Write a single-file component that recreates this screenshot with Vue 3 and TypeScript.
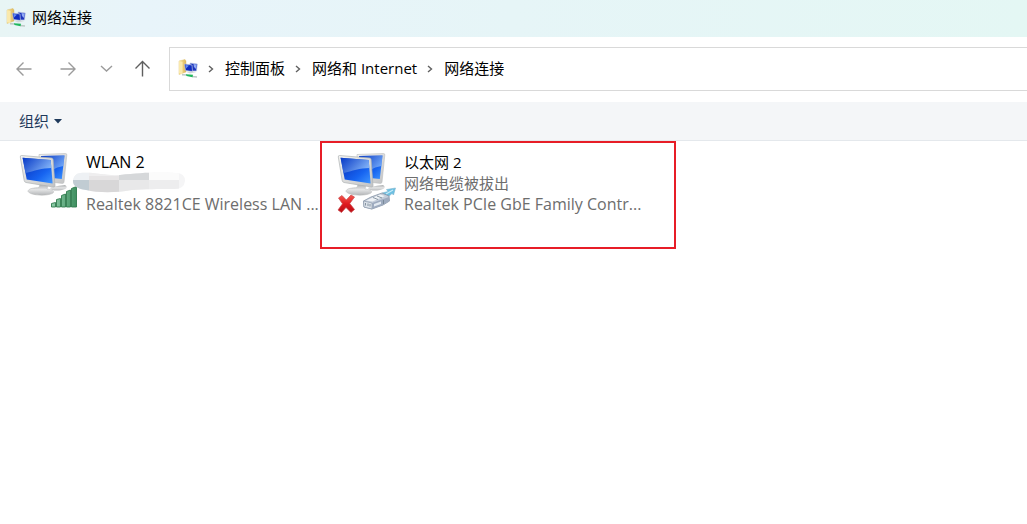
<script setup lang="ts">
interface Label {
  text: string
  lang: 'en' | 'zh'
}

interface Connection {
  name: Label
  status: string
  device: string
  kind: 'wifi' | 'cable'
  marked: boolean
}

const crumbs: string[] = ['控制面板', '网络和 Internet', '网络连接']

const connections: Connection[] = [
  {
    name: { text: 'WLAN 2', lang: 'en' },
    status: '',
    device: 'Realtek 8821CE Wireless LAN ...',
    kind: 'wifi',
    marked: false,
  },
  {
    name: { text: '以太网 2', lang: 'zh' },
    status: '网络电缆被拔出',
    device: 'Realtek PCIe GbE Family Contr...',
    kind: 'cable',
    marked: true,
  },
]
</script>

<template>
  <div class="window">
    <svg class="library" width="0" height="0" aria-hidden="true">
      <defs>
        <linearGradient id="screen" x1="0" y1="0" x2="1" y2="1">
          <stop offset="0" stop-color="#0a3fd0" />
          <stop offset="0.35" stop-color="#0f48d4" />
          <stop offset="0.65" stop-color="#1663f0" />
          <stop offset="1" stop-color="#3f96ff" />
        </linearGradient>
        <linearGradient id="shine" x1="0" y1="0" x2="1" y2="0.5">
          <stop offset="0" stop-color="#0538c4" />
          <stop offset="1" stop-color="#8fbcf8" />
        </linearGradient>
        <linearGradient id="frame" x1="0" y1="0" x2="1" y2="1">
          <stop offset="0" stop-color="#f4f4f2" />
          <stop offset="1" stop-color="#c2c3c4" />
        </linearGradient>
        <linearGradient id="stand" x1="0" y1="0" x2="0" y2="1">
          <stop offset="0" stop-color="#a9abad" />
          <stop offset="0.5" stop-color="#e4e5e6" />
          <stop offset="1" stop-color="#b4b6b8" />
        </linearGradient>
        <linearGradient id="bar" x1="0" y1="0" x2="1" y2="0">
          <stop offset="0" stop-color="#8fceaa" />
          <stop offset="1" stop-color="#3f8f60" />
        </linearGradient>
        <linearGradient id="cross" x1="0" y1="0" x2="0" y2="1">
          <stop offset="0" stop-color="#f45a50" />
          <stop offset="0.5" stop-color="#e01b20" />
          <stop offset="1" stop-color="#b90c14" />
        </linearGradient>
        <linearGradient id="folder" x1="0" y1="0" x2="1" y2="0">
          <stop offset="0" stop-color="#f9e6a0" />
          <stop offset="1" stop-color="#dfb85a" />
        </linearGradient>
        <symbol id="monitors" viewBox="0 0 60 65">
          <path d="M32 38c2-2 11-2 15-3 3 2 2 4-3 5-5 1-11 1-12-2z" fill="url(#stand)" />
          <path d="M21 4.500L47.500 3.500Q49 3.500 48.800 5L46 32Q45.800 33.500 44.500 33.400L22 31z" fill="url(#frame)" stroke="#babcbd" stroke-width=".6" />
          <path d="M23 6L46.500 5.500L43.800 29L24 27z" fill="url(#screen)" />
          <path d="M23 6L46.500 5.500L45.300 16Q39 17 34 20L23 20z" fill="url(#shine)" opacity=".7" />
          <path d="M22 34L30 35L29 39C37 40 38 43 31 44.500C24 46 12 45 10 41.500C10 38 17 38 21 37.500z" fill="url(#stand)" stroke="#b6b8b9" stroke-width=".5" />
          <path d="M3.500 5.500L33.500 8Q35 8.100 35.100 9.600L37 35.500Q37 37.200 35.500 37L8 32.500Q6.500 32.200 6.200 30.500L2.300 7Q2.200 5.400 3.500 5.500z" fill="url(#frame)" stroke="#aeb1b3" stroke-width=".7" />
          <path d="M4.600 7.800L32.700 10L34.600 33.500L8.700 29.500z" fill="url(#screen)" />
          <path d="M4.600 7.800L32.700 10L33.400 18C24 18 16 21 7.500 23z" fill="url(#shine)" opacity=".85" />
        </symbol>
        <symbol id="place" viewBox="0 0 20 20">
          <path d="M1 2L7 .5L8 2L8 13L1 15.500z" fill="url(#folder)" stroke="#d9b85f" stroke-width=".4" />
          <path d="M1 2L4.500 3L4.500 15.500L1 14z" fill="#fae9ad" />
          <path d="M12 4L19.300 5L18.500 12L13 12z" fill="#1e35bd" stroke="#c2cbe4" stroke-width=".7" />
          <path d="M15.500 5L18.700 5.600L18 10L16 8z" fill="#91aaf5" />
          <path d="M6.500 5L14 6L14.500 12.500L7.500 11.500z" fill="#102cc0" stroke="#bac5de" stroke-width=".7" />
          <path d="M7.500 6L11 6.500L8 9.500z" fill="#688ff1" />
          <path d="M8 12.800L14.500 12.500L18.500 13L12 14.500z" fill="#d4d8da" />
          <path d="M4 15.800L9 16M14 17.500L19 18" stroke="#bec8c6" stroke-width="1.400" />
          <path d="M8 15.200L15 15.800L14.500 18.200L8.500 17z" fill="#20b85d" />
        </symbol>
      </defs>
    </svg>

    <header class="titlebar">
      <svg class="place-icon" aria-hidden="true"><use href="#place" /></svg>
      <h1>网络连接</h1>
    </header>

    <nav class="navbar" aria-label="导航">
      <div class="nav-buttons">
        <button type="button" aria-label="后退" class="muted">
          <svg viewBox="0 0 20 20"><path d="M17.500 10H3M9.500 3.500L3 10l6.500 6.500" /></svg>
        </button>
        <button type="button" aria-label="前进" class="muted">
          <svg viewBox="0 0 20 20"><path d="M2.500 10H17M10.500 3.500L17 10l-6.500 6.500" /></svg>
        </button>
        <button type="button" aria-label="最近位置" class="muted narrow">
          <svg viewBox="0 0 20 20"><path d="M5 7l5.500 5L16 7" /></svg>
        </button>
        <button type="button" aria-label="向上" class="up">
          <svg viewBox="0 0 20 20"><path d="M10.500 17.500V2.500M3.500 9.500l7-7 7 7" /></svg>
        </button>
      </div>
      <div class="address">
        <svg class="place-icon" aria-hidden="true"><use href="#place" /></svg>
        <template v-for="crumb in crumbs" :key="crumb">
          <svg class="chevron" viewBox="0 0 8 10" aria-hidden="true"><path d="M2 2l3.500 3L2 8" /></svg>
          <a href="#">{{ crumb }}</a>
        </template>
      </div>
    </nav>

    <div class="toolbar">
      <button type="button">
        组织
        <svg viewBox="0 0 8 5" aria-hidden="true"><path d="M0 0h8L4 4.500z" /></svg>
      </button>
    </div>

    <main class="connections">
      <article v-for="item in connections" :key="item.name.text" class="connection" :class="{ marked: item.marked }">
        <svg class="adapter" viewBox="0 0 60 65" aria-hidden="true">
          <use href="#monitors" width="60" height="65" />
          <g v-if="item.kind === 'wifi'" fill="url(#bar)" stroke="#2f7a4d" stroke-width=".9">
            <path d="M33.500 53.500l4-1v4.500h-4zM38.500 49.500l4-1v8.500h-4zM43.500 45.500l4-1.500v13h-4zM48.500 41.500l4-1.500v17h-4zM53.500 38.500l5-2v20.500h-5z" />
          </g>
          <g v-else>
            <path d="M2.500 48L6 45.500L10.300 50L15 45L18.500 47L13.800 53.500L18.500 59.500L15 62.500L10 57.500L5.500 62.500L2 60L6.500 53.800z" fill="url(#cross)" stroke="#c9484c" stroke-width=".7" />
            <path d="M46 43L52 41.500L50.500 39.500L59.500 38L57.500 45L56 43.500L51 48z" fill="#6cc0e2" stroke="#7fb6d0" stroke-width=".6" />
            <path d="M50 44L57 40" stroke="#c8ebf8" stroke-width="1.200" />
            <path d="M27.500 51L35 47L46 43L53 46L53.500 51L47 55L36 59L28 57z" fill="#c3ccd9" stroke="#8794a6" stroke-width=".8" />
            <path d="M27.500 51L36 53L36 59L28 57z" fill="#dde3ea" stroke="#8794a6" stroke-width=".6" />
            <path d="M36 53L53 47L53.500 51L47 55L36 59z" fill="#9eabbf" />
            <path d="M30 50.500L44 44.500L49 46L36.500 51.500z" fill="#eef2f6" />
            <path d="M38 54L45 51.500L45 54L38 56.500z" fill="#e2e9f1" />
            <path d="M29.500 53v2.500M32 53.500v2.500M34 54v2.500M37 47.500l5 2M41 46l5 2M47.500 50v4" stroke="#70808f" stroke-width=".8" fill="none" />
          </g>
        </svg>
        <div class="details">
          <h2 :lang="item.name.lang">{{ item.name.text }}</h2>
          <p class="status">{{ item.status }}</p>
          <p lang="en">{{ item.device }}</p>
        </div>
        <svg v-if="!item.status" class="redaction" viewBox="0 0 114 22" aria-hidden="true">
          <clipPath id="brush">
            <path d="M8 1C24 0 34 4 48 3C68 1 82 0 104 1Q113 1 113 9Q112 17 103 17C84 17 74 17 60 18C44 21 26 21 14 18Q0 16 1 8Q2 2 8 1z" />
          </clipPath>
          <g clip-path="url(#brush)">
            <path d="M0 0h114v22H0z" fill="#f5f5f6" />
            <path d="M0 0h17v8H0z" fill="#eef1f4" />
            <path d="M0 8h17v14H0z" fill="#c1ccd3" />
            <path d="M17 0h30v4H17z" fill="#efeeef" />
            <path d="M17 4h30v4H17z" fill="#e7e5e6" />
            <path d="M17 8h30v14H17z" fill="#d8d7d8" />
            <path d="M47 0h30v8H47z" fill="#d6d8da" />
            <path d="M47 8h30v14H47z" fill="#e8e8e9" />
            <path d="M77 0h30v8H77z" fill="#fbfbfb" />
            <path d="M77 8h30v14H77z" fill="#ededee" />
          </g>
        </svg>
      </article>
    </main>
  </div>
</template>

<style>
body {
  margin: 0;
  background: #fff;
}
</style>

<style scoped>
.window {
  min-height: 100vh;
  overflow: hidden;
  background: #fff;
  color: #000;
  font: 15px/21px "Open Sans", "Noto Sans CJK SC", sans-serif;
}

.library {
  position: absolute;
}

h1,
h2,
p {
  margin: 0;
  font: inherit;
}

button {
  border: 0;
  padding: 0;
  background: none;
  font: inherit;
}

.place-icon {
  flex: none;
  width: 20px;
  height: 20px;
}

.titlebar {
  display: flex;
  align-items: center;
  gap: 6px;
  box-sizing: border-box;
  height: 37px;
  padding: 0 6px 2px;
  background: linear-gradient(90deg, #e8f5f5 0, #e8f4fa 14%, #e6f5f7 50%, #e4f7f4 100%);
}

.navbar {
  display: flex;
  align-items: center;
  box-sizing: border-box;
  height: 65px;
  padding-bottom: 2px;
}

.nav-buttons {
  display: flex;
  align-items: center;
  gap: 24px;
  flex: none;
  padding: 0 17px 0 14px;
}

.nav-buttons button {
  display: flex;
}

.nav-buttons svg {
  width: 20px;
  height: 20px;
  fill: none;
  stroke: #5f5f5f;
  stroke-width: 1.4;
}

.nav-buttons .muted svg {
  stroke: #9b9b9b;
}

.nav-buttons .narrow {
  margin: 0 -8px 0 -6px;
}

.address {
  display: flex;
  align-items: center;
  flex: 1;
  box-sizing: border-box;
  height: 44px;
  padding-left: 8px;
  border: 1px solid #d9d9d9;
  border-right: 0;
}

.address a {
  color: #000;
  text-decoration: none;
  white-space: nowrap;
}

.chevron {
  width: 8px;
  height: 10px;
  margin: 0 10px 0 9px;
  fill: none;
  stroke: #606060;
  stroke-width: 1.4;
}

.toolbar {
  display: flex;
  align-items: center;
  box-sizing: border-box;
  height: 39px;
  padding-left: 19px;
  border-bottom: 1px solid #e4e8ec;
  background: #f4f6f8;
}

.toolbar button {
  display: flex;
  align-items: center;
  gap: 5px;
  color: #1e395b;
}

.toolbar svg {
  width: 8px;
  height: 5px;
  fill: #1e395b;
}

.connections {
  display: grid;
  grid-template-columns: 320px 356px;
}

.connection {
  position: relative;
  display: flex;
  align-items: flex-start;
  gap: 8px;
  box-sizing: border-box;
  min-height: 108px;
  padding: 9px 0 0 18px;
}

.connection.marked {
  padding: 7px 0 0 14px;
  border: 2px solid #e71d27;
}

.adapter {
  flex: none;
  width: 60px;
  height: 65px;
}

.details {
  padding-top: 2px;
  color: #6d6d6d;
  white-space: nowrap;
}

.details h2 {
  color: #000;
}

.details [lang="en"] {
  font-size: 16px;
}

.status {
  min-height: 21px;
}

.redaction {
  position: absolute;
  left: 72px;
  top: 31px;
  width: 114px;
  height: 22px;
}
</style>
